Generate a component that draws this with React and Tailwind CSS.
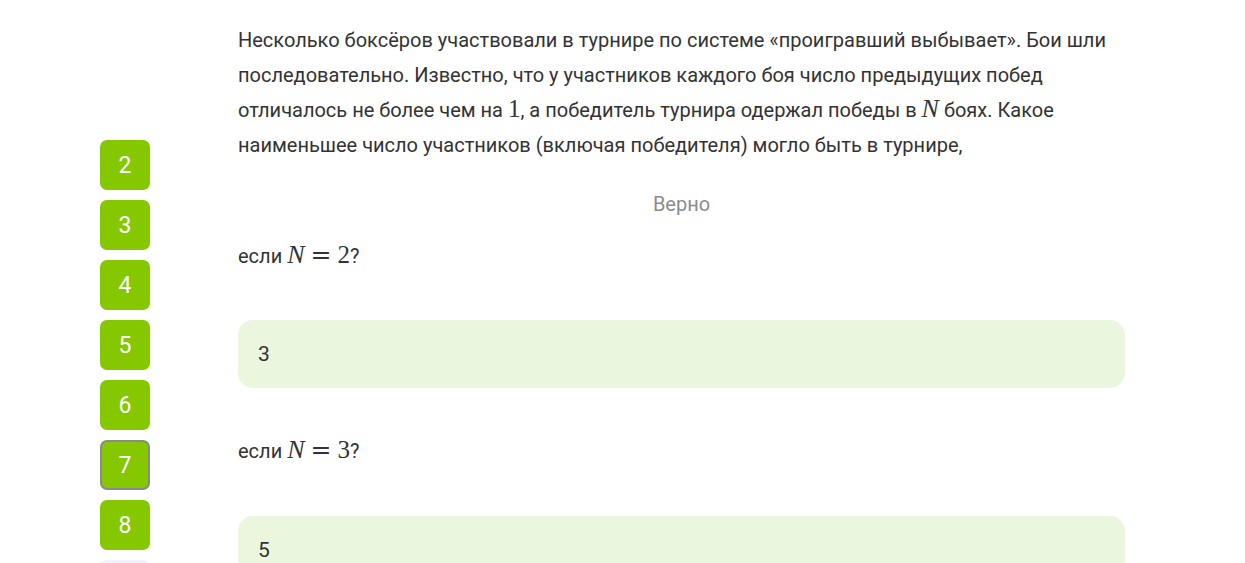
import React from "react";

const serif = { fontFamily: '"Liberation Serif", "DejaVu Serif", serif' };
const M = ({ children }) => (
  <span className="italic text-[26px] leading-none" style={serif}>
    {children}
  </span>
);
const R = ({ children }) => (
  <span className="text-[25px] leading-none" style={serif}>
    {children}
  </span>
);
const Eq = () => (
  <span className="text-[25px] leading-none mx-[6px]" style={{ fontFamily: '"DejaVu Serif", serif' }}>
    =
  </span>
);

export default function App() {
  const nums = [2, 3, 4, 5, 6, 7, 8];
  return (
    <div className="w-[1245px] h-[563px] overflow-hidden bg-white flex font-['Roboto',sans-serif] text-[#333333]">
      <div className="w-[238px] shrink-0 pl-[100px] pt-[140px] flex flex-col gap-[10px]">
        {nums.map((n) => (
          <div
            key={n}
            className={`w-[50px] h-[50px] shrink-0 rounded-[7px] bg-[#86c800] text-white text-[23px] pt-[2px] flex items-center justify-center ${
              n === 7 ? "border-2 border-[#8a8a8a]" : ""
            }`}
          >
            {n}
          </div>
        ))}
        <div className="w-[50px] h-[50px] shrink-0 rounded-[7px] bg-[#f1f1fb]" />
      </div>
      <div className="w-[887px] pt-[23px]">
        <p className="text-[20px] leading-[35px]">
          Несколько боксёров участвовали в турнире по системе «проигравший выбывает». Бои шли последовательно. Известно,
          что у участников каждого боя число предыдущих побед отличалось не более чем на <R>1</R>, а победитель турнира
          одержал победы в <M>N</M> боях. Какое наименьшее число участников (включая победителя) могло быть в турнире,
        </p>
        <div className="mt-[24px] text-center text-[20px] leading-[35px] text-[#8c8c8c]">Верно</div>
        <div className="mt-[17px] text-[20px] leading-[35px]">
          если <M>N</M><Eq /><R>2</R>?
        </div>
        <div className="mt-[45.5px] h-[68px] rounded-[15px] bg-[#eaf6de] flex items-center px-[20px] pt-[2px] text-[21px]">3</div>
        <div className="mt-[46.5px] text-[20px] leading-[35px]">
          если <M>N</M><Eq /><R>3</R>?
        </div>
        <div className="mt-[46.5px] h-[68px] rounded-[15px] bg-[#eaf6de] flex items-center px-[20px] pt-[2px] text-[21px]">5</div>
      </div>
    </div>
  );
}
